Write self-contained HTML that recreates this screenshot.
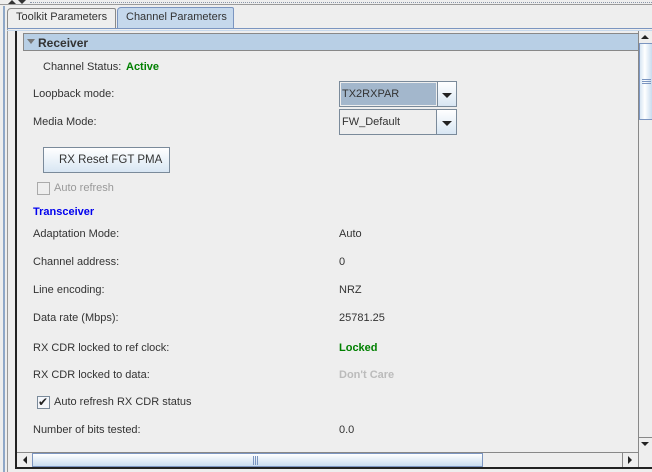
<!DOCTYPE html>
<html><head><style>
*{margin:0;padding:0;box-sizing:border-box}
body{width:652px;height:472px;background:#eeeeee;position:relative;overflow:hidden;font-family:"Liberation Sans",sans-serif;font-size:11px;color:#333}
.a{position:absolute}
.lbl{position:absolute;font-size:11px;color:#333;white-space:nowrap}
.grad{background:linear-gradient(#ffffff,#d8e6f3)}
</style></head><body>
<!-- top dotted strip -->
<div class="a" style="left:0;top:0;width:652px;height:5px;border-bottom:1px solid #9a9a9a"></div>
<div class="a" style="left:30px;top:2px;width:622px;height:1px;border-top:1px dotted #8a95a8"></div>
<div class="a" style="left:8px;top:0;width:0;height:0;border-left:4px solid transparent;border-right:4px solid transparent;border-bottom:4px solid #333"></div>
<div class="a" style="left:18px;top:0;width:0;height:0;border-left:4px solid transparent;border-right:4px solid transparent;border-top:4px solid #333"></div>
<!-- left stripes -->
<div class="a" style="left:3px;top:6px;width:2px;height:466px;background:#8fa8c8"></div>
<div class="a" style="left:7px;top:28px;width:1px;height:444px;background:#999"></div>
<!-- tabs -->
<div class="a" style="left:7px;top:8px;width:109px;height:21px;border:1px solid #8a8a8a;border-bottom:none;border-radius:4px 2px 0 0;background:#eee"></div>
<div class="lbl" style="left:16px;top:11px">Toolkit Parameters</div>
<div class="a" style="left:117px;top:7px;width:117px;height:22px;border:1px solid #7b95c0;border-bottom:none;border-radius:4px 2px 0 0;background:#c5d8ec"></div>
<div class="lbl" style="left:126px;top:11px">Channel Parameters</div>
<div class="a" style="left:7px;top:28px;width:645px;height:1px;background:#7b95c0"></div>
<div class="a" style="left:7px;top:30px;width:645px;height:1px;background:#c5d8ec"></div>
<!-- black left line -->
<div class="a" style="left:15px;top:31px;width:2px;height:438px;background:#222"></div>
<div class="a" style="left:15px;top:467px;width:637px;height:2px;background:#222"></div>
<!-- receiver header -->
<div class="a" style="left:23px;top:33px;width:616px;height:18px;background:#b8cfe5;border:1px solid #888;border-right:none"></div>
<div class="a" style="left:27px;top:39px;width:0;height:0;border-left:4px solid transparent;border-right:4px solid transparent;border-top:5px solid #777"></div>
<div class="lbl" style="left:38px;top:36px;font-weight:bold;font-size:12px;color:#333">Receiver</div>
<!-- content -->
<div class="lbl" style="left:43px;top:61px">Channel Status:</div>
<div class="lbl" style="left:126px;top:61px;font-weight:bold;color:#008000">Active</div>
<div class="lbl" style="left:33px;top:88px">Loopback mode:</div>
<div class="lbl" style="left:33px;top:116px">Media Mode:</div>
<!-- combos -->
<div class="a" style="left:339px;top:81px;width:118px;height:26px;border:1px solid #7a8a9a;background:#eee"></div>
<div class="a" style="left:341px;top:83px;width:95px;height:22px;background:#a3b7cc"></div>
<div class="lbl" style="left:342px;top:88px">TX2RXPAR</div>
<div class="a grad" style="left:437px;top:82px;width:19px;height:24px;border-left:1px solid #7a8a9a"></div>
<div class="a" style="left:442px;top:93px;border-left:5px solid transparent;border-right:5px solid transparent;border-top:5px solid #222"></div>
<div class="a" style="left:339px;top:109px;width:118px;height:26px;border:1px solid #7a8a9a;background:#eee"></div>
<div class="lbl" style="left:342px;top:116px">FW_Default</div>
<div class="a" style="left:436px;top:110px;width:1px;height:24px;background:#7a8a9a"></div>
<div class="a grad" style="left:437px;top:110px;width:19px;height:24px"></div>
<div class="a" style="left:442px;top:121px;border-left:5px solid transparent;border-right:5px solid transparent;border-top:5px solid #222"></div>
<!-- button -->
<div class="a grad" style="left:43px;top:147px;width:127px;height:26px;border:1px solid #7a8a9a"></div>
<div class="lbl" style="left:59px;top:154px;font-size:11.5px">RX Reset FGT PMA</div>
<div class="a" style="left:37px;top:182px;width:13px;height:13px;border:1px solid #aaa;background:#eee"></div>
<div class="lbl" style="left:54px;top:182px;color:#999">Auto refresh</div>
<div class="lbl" style="left:33px;top:206px;font-weight:bold;color:#0000ee">Transceiver</div>
<div class="lbl" style="left:33px;top:228px">Adaptation Mode:</div><div class="lbl" style="left:339px;top:228px">Auto</div>
<div class="lbl" style="left:33px;top:256px">Channel address:</div><div class="lbl" style="left:339px;top:256px">0</div>
<div class="lbl" style="left:33px;top:284px">Line encoding:</div><div class="lbl" style="left:339px;top:284px">NRZ</div>
<div class="lbl" style="left:33px;top:312px">Data rate (Mbps):</div><div class="lbl" style="left:339px;top:312px">25781.25</div>
<div class="lbl" style="left:33px;top:342px">RX CDR locked to ref clock:</div><div class="lbl" style="left:339px;top:342px;font-weight:bold;color:#008000">Locked</div>
<div class="lbl" style="left:33px;top:369px">RX CDR locked to data:</div><div class="lbl" style="left:339px;top:369px;font-weight:bold;color:#bbb">Don't Care</div>
<div class="a" style="left:37px;top:396px;width:13px;height:13px;border:1px solid #7a8a9a;background:#f4f6fa"></div>
<div class="lbl" style="left:38px;top:395px;font-size:12px;color:#222">✔</div>
<div class="lbl" style="left:54px;top:396px">Auto refresh RX CDR status</div>
<div class="lbl" style="left:33px;top:424px">Number of bits tested:</div><div class="lbl" style="left:339px;top:424px">0.0</div>
<!-- vertical scrollbar -->
<div class="a" style="left:638px;top:31px;width:1px;height:422px;background:#888"></div>
<div class="a" style="left:639px;top:31px;width:13px;height:422px;background:#eee"></div>
<div class="a" style="left:641px;top:35px;border-left:4px solid transparent;border-right:4px solid transparent;border-bottom:4px solid #222"></div>
<div class="a" style="left:639px;top:43px;width:13px;height:77px;background:linear-gradient(90deg,#d8e6f3,#ffffff 40%,#c8dcef);border:1px solid #7b95c0;border-right:none"></div>
<div class="a" style="left:642px;top:79px;width:9px;height:5px;border-top:1px solid #7b95c0;border-bottom:1px solid #7b95c0"></div>
<div class="a" style="left:642px;top:81px;width:9px;height:1px;background:#7b95c0"></div>
<div class="a" style="left:639px;top:437px;width:13px;height:1px;background:#888"></div>
<div class="a" style="left:641px;top:442px;border-left:4px solid transparent;border-right:4px solid transparent;border-top:4px solid #222"></div>
<!-- horizontal scrollbar -->
<div class="a" style="left:17px;top:452px;width:621px;height:15px;background:#eee;border-top:1px solid #888"></div>
<div class="a" style="left:23px;top:456px;border-top:4px solid transparent;border-bottom:4px solid transparent;border-right:4px solid #222"></div>
<div class="a" style="left:32px;top:453px;width:451px;height:14px;background:linear-gradient(#ffffff,#c8dcef);border:1px solid #7b95c0"></div>
<div class="a" style="left:253px;top:456px;width:5px;height:9px;border-left:1px solid #7b95c0;border-right:1px solid #7b95c0"></div>
<div class="a" style="left:255px;top:456px;width:1px;height:9px;background:#7b95c0"></div>
<div class="a" style="left:622px;top:453px;width:1px;height:14px;background:#888"></div>
<div class="a" style="left:628px;top:456px;border-top:4px solid transparent;border-bottom:4px solid transparent;border-left:4px solid #222"></div>
<div class="a" style="left:638px;top:453px;width:14px;height:14px;background:#eee;border-left:1px solid #888"></div>
</body></html>
